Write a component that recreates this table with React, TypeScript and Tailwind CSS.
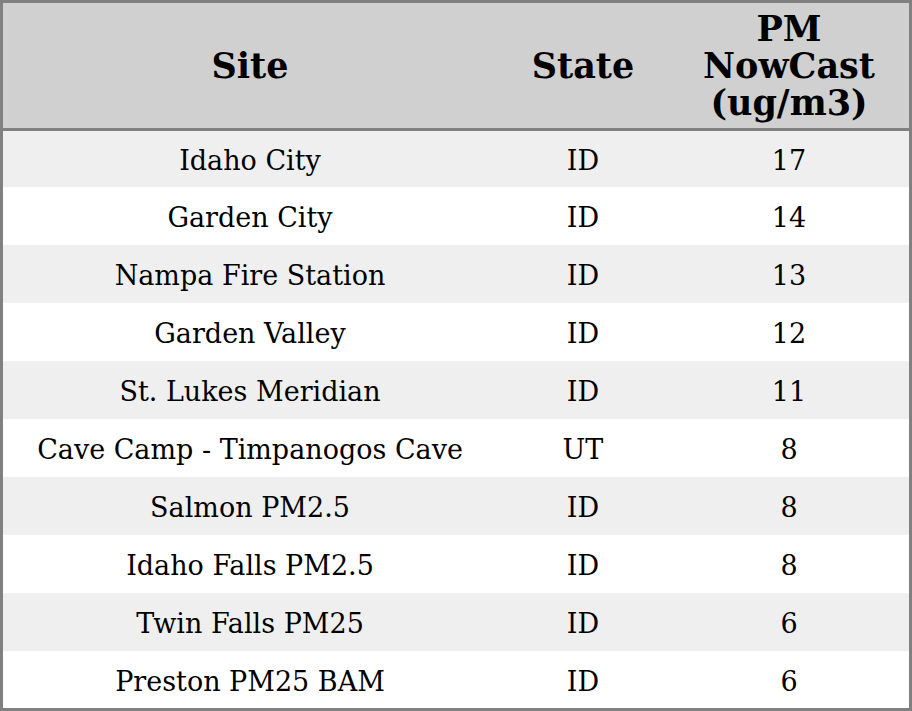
const rows = [
  { site: "Idaho City", state: "ID", pm: "17" },
  { site: "Garden City", state: "ID", pm: "14" },
  { site: "Nampa Fire Station", state: "ID", pm: "13" },
  { site: "Garden Valley", state: "ID", pm: "12" },
  { site: "St. Lukes Meridian", state: "ID", pm: "11" },
  { site: "Cave Camp - Timpanogos Cave", state: "UT", pm: "8" },
  { site: "Salmon PM2.5", state: "ID", pm: "8" },
  { site: "Idaho Falls PM2.5", state: "ID", pm: "8" },
  { site: "Twin Falls PM25", state: "ID", pm: "6" },
  { site: "Preston PM25 BAM", state: "ID", pm: "6" },
];

const App = () => {
  return (
    <div className="w-[912px] h-[711px] bg-white border-[3px] border-[#808080] font-['DejaVu_Serif',serif] text-black overflow-hidden">
      <table className="w-[906px] table-fixed border-separate border-spacing-0">
        <colgroup>
          <col className="w-[494px]" />
          <col className="w-[172px]" />
          <col className="w-[240px]" />
        </colgroup>
        <thead>
          <tr className="bg-[#d0d0d0]">
            <th className="h-[128px] p-0 border-b-[3px] border-[#808080] text-[35px] leading-[37px] font-bold text-center">Site</th>
            <th className="h-[128px] p-0 border-b-[3px] border-[#808080] text-[35px] leading-[37px] font-bold text-center">State</th>
            <th className="h-[128px] p-0 border-b-[3px] border-[#808080] text-[35px] leading-[37px] font-bold text-center">
              PM
              <br />
              NowCast
              <br />
              (ug/m3)
            </th>
          </tr>
        </thead>
        <tbody>
          {rows.map((r, i) => (
            <tr key={r.site} className={i % 2 === 0 ? "bg-[#efefef]" : "bg-white"}>
              <td className={"p-0 pt-[4px] text-[27px] text-center " + (i === 0 ? "h-[56px]" : "h-[58px]")}>{r.site}</td>
              <td className={"p-0 pt-[4px] text-[27px] text-center " + (i === 0 ? "h-[56px]" : "h-[58px]")}>{r.state}</td>
              <td className={"p-0 pt-[4px] text-[27px] text-center " + (i === 0 ? "h-[56px]" : "h-[58px]")}>{r.pm}</td>
            </tr>
          ))}
        </tbody>
      </table>
    </div>
  );
};

export default App;
